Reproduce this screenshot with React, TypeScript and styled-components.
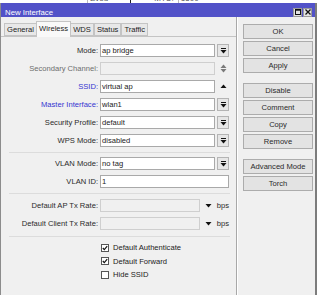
import React from 'react'
import styled, { createGlobalStyle } from 'styled-components'

const GlobalStyle = createGlobalStyle`
    html, body {
        margin: 0;
        padding: 0;
        background: #ffffff;
    }
    body {
        font-family: 'Liberation Sans', Arial, sans-serif;
        font-size: 7.6px;
        color: #222222;
    }
`

const Screen = styled.div`
    width: 320px;
    height: 295px;
    overflow: hidden;
    background: #ffffff;
`
const Desktop = styled.div`
    height: 3px;
    overflow: hidden;
`
const DesktopRow = styled.div`
    display: flex;
    align-items: flex-end;
    height: 9px;
    margin-top: -6px;
    font-size: 8px;
    color: #555;
`
const DesktopCell = styled.div<{ $left: number; $line?: string }>`
    margin-left: ${(p) => p.$left}px;
    height: 9px;
    padding-left: 2px;
    border-left: 1px solid ${(p) => p.$line || 'transparent'};
`
const Window = styled.div`
    width: 317px;
    height: 292px;
    box-sizing: border-box;
    border-left: 1px solid #8c8c8c;
    border-right: 2px solid #7c7c7c;
    background: #f0f0f0;
    display: flex;
    flex-direction: column;
`
const TitleBar = styled.div`
    height: 14px;
    box-sizing: border-box;
    padding: 4px 3px 0 4px;
    background: #5252c8;
    color: #ffffff;
    display: flex;
    align-items: center;
    font-size: 7.8px;
`
const Title = styled.div`
    flex: 1;
`
const TitleButton = styled.div`
    width: 9px;
    height: 9px;
    box-sizing: border-box;
    margin-left: 1px;
    background: #e4e4e4;
    border: 1px solid #9a9a9a;
    display: flex;
    align-items: center;
    justify-content: center;
`
const Body = styled.div`
    flex: 1;
    display: flex;
`
const Main = styled.div`
    width: 235px;
    display: flex;
    flex-direction: column;
    border-right: 1px solid #a8a8a8;
    box-shadow: 1px 0 0 #ffffff;
`
const Tabs = styled.div`
    height: 19px;
    display: flex;
    align-items: flex-end;
    padding-left: 3px;
    position: relative;
    z-index: 1;
`
const Tab = styled.div<{ $active?: boolean }>`
    height: ${(p) => (p.$active ? 16 : 13)}px;
    box-sizing: border-box;
    padding: 0 2px;
    margin: 0 ${(p) => (p.$active ? '-1px' : '0')};
    margin-bottom: ${(p) => (p.$active ? '-1px' : '0')};
    display: flex;
    align-items: center;
    padding-bottom: ${(p) => (p.$active ? '3px' : '0')};
    border: 1px solid #c4c4c4;
    border-bottom: ${(p) => (p.$active ? 'none' : '1px solid #c4c4c4')};
    background: ${(p) => (p.$active ? '#f9f9f9' : '#e8e8e8')};
    color: #222;
`
const Panel = styled.div`
    flex: 1;
    border-top: 1px solid #c4c4c4;
    padding: 7px 7px 0 2px;
    display: flex;
    flex-direction: column;
`
const Section = styled.div`
    display: flex;
    flex-direction: column;
    gap: 5px;
`
const Row = styled.div`
    display: grid;
    grid-template-columns: 95px 129px;
    column-gap: 2px;
    height: 13px;
    align-items: center;
`
const Label = styled.div<{ $tone?: 'normal' | 'muted' | 'link' }>`
    text-align: right;
    white-space: nowrap;
    color: ${(p) => (p.$tone === 'muted' ? '#6d6d6d' : p.$tone === 'link' ? '#3535d0' : '#2a2a2a')};
`
const Control = styled.div`
    display: flex;
    align-items: center;
    height: 13px;
    gap: 2px;
`
const Field = styled.div<{ $disabled?: boolean; $width?: number }>`
    ${(p) => (p.$width ? `width: ${p.$width}px;` : 'flex: 1;')}
    height: 13px;
    box-sizing: border-box;
    border: 1px solid ${(p) => (p.$disabled ? '#cfcfcf' : '#a9a9a9')};
    background: ${(p) => (p.$disabled ? '#f0f0f0' : '#ffffff')};
    padding-left: 1px;
    display: flex;
    align-items: center;
    white-space: nowrap;
    overflow: hidden;
`
const DropButton = styled.div`
    width: 12px;
    height: 13px;
    box-sizing: border-box;
    border: 1px solid #b4b4b4;
    background: #e6e6e6;
    display: flex;
    align-items: center;
    justify-content: center;
`
const GlyphSlot = styled.div<{ $width?: number }>`
    width: ${(p) => p.$width || 12}px;
    height: 13px;
    display: flex;
    align-items: center;
    justify-content: center;
`
const Unit = styled.div`
    color: #2a2a2a;
`
const Separator = styled.div<{ $top: number; $bottom: number }>`
    height: 1px;
    margin: ${(p) => p.$top}px 0 ${(p) => p.$bottom}px 6px;
    width: 221px;
    background: #dcdcdc;
`
const Checks = styled.div`
    display: flex;
    flex-direction: column;
    gap: 2.5px;
`
const CheckRow = styled.div`
    display: flex;
    align-items: center;
    height: 11px;
    padding-left: 98px;
    gap: 4px;
`
const Box = styled.div`
    width: 8px;
    height: 8px;
    box-sizing: border-box;
    border: 1px solid #555;
    background: #ffffff;
    display: flex;
    align-items: center;
    justify-content: center;
`
const Side = styled.div`
    flex: 1;
    padding: 7px 0 0 6px;
    display: flex;
    flex-direction: column;
    gap: 10px;
`
const ButtonGroup = styled.div`
    display: flex;
    flex-direction: column;
    gap: 2px;
`
const Button = styled.div`
    width: 70px;
    height: 15px;
    box-sizing: border-box;
    border: 1px solid #acacac;
    background: #e3e3e3;
    display: flex;
    align-items: center;
    justify-content: center;
    color: #2a2a2a;
`

const DropGlyph = () => (
    <svg width="7" height="6" viewBox="0 0 7 6">
        <rect x="1" y="0" width="5" height="1" fill="#111" />
        <path d="M0.5 2 H6.5 L3.5 5.5 Z" fill="#111" />
    </svg>
)
const UpDown = () => (
    <svg width="7" height="9" viewBox="0 0 7 9">
        <path d="M0.5 4 H6.5 L3.5 0.5 Z" fill="#7a7a7a" />
        <path d="M0.5 5 H6.5 L3.5 8.5 Z" fill="#7a7a7a" />
    </svg>
)
const Up = () => (
    <svg width="7" height="5" viewBox="0 0 7 5">
        <path d="M0.5 4 H6.5 L3.5 0.5 Z" fill="#111" />
    </svg>
)
const Down = () => (
    <svg width="7" height="5" viewBox="0 0 7 5">
        <path d="M0.5 1 H6.5 L3.5 4.5 Z" fill="#111" />
    </svg>
)
const Tick = () => (
    <svg width="6" height="6" viewBox="0 0 6 6">
        <path d="M0.8 3 L2.3 4.6 L5.2 1.2" stroke="#111" strokeWidth="1.2" fill="none" />
    </svg>
)

type SelectRow = { label: string; value?: string; tone?: 'normal' | 'muted' | 'link'; kind: 'drop' | 'updown' | 'up' | 'plain'; disabled?: boolean }

const general: SelectRow[] = [
    { label: 'Mode:', value: 'ap bridge', kind: 'drop' },
    { label: 'Secondary Channel:', tone: 'muted', kind: 'updown', disabled: true },
    { label: 'SSID:', value: 'virtual ap', tone: 'link', kind: 'up' },
    { label: 'Master Interface:', value: 'wlan1', tone: 'link', kind: 'drop' },
    { label: 'Security Profile:', value: 'default', kind: 'drop' },
    { label: 'WPS Mode:', value: 'disabled', kind: 'drop' },
]
const vlan: SelectRow[] = [
    { label: 'VLAN Mode:', value: 'no tag', kind: 'drop' },
    { label: 'VLAN ID:', value: '1', kind: 'plain' },
]

const FormRow = ({ row }: { row: SelectRow }) => (
    <Row>
        <Label $tone={row.tone}>{row.label}</Label>
        <Control>
            <Field $disabled={row.disabled}>{row.value}</Field>
            {row.kind === 'drop' && (
                <DropButton>
                    <DropGlyph />
                </DropButton>
            )}
            {row.kind === 'updown' && (
                <GlyphSlot>
                    <UpDown />
                </GlyphSlot>
            )}
            {row.kind === 'up' && (
                <GlyphSlot>
                    <Up />
                </GlyphSlot>
            )}
        </Control>
    </Row>
)

const RateRow = ({ label }: { label: string }) => (
    <Row>
        <Label>{label}</Label>
        <Control>
            <Field $disabled $width={100} />
            <GlyphSlot $width={13}>
                <Down />
            </GlyphSlot>
            <Unit>bps</Unit>
        </Control>
    </Row>
)

const App = () => {
    return (
        <Screen>
            <GlobalStyle />
            <Desktop>
                <DesktopRow>
                    <DesktopCell $left={87} $line="#bbbbbb">Evod</DesktopCell>
                    <DesktopCell $left={22} $line="#222222" />
                    <DesktopCell $left={18}>MTU:</DesktopCell>
                    <DesktopCell $left={4} $line="#bbbbbb">1500</DesktopCell>
                </DesktopRow>
            </Desktop>
            <Window>
                <TitleBar>
                    <Title>New Interface</Title>
                    <TitleButton>
                        <svg width="6" height="6" viewBox="0 0 6 6">
                            <rect x="0.5" y="0.5" width="5" height="5" fill="none" stroke="#111" />
                            <rect x="0.5" y="0.5" width="5" height="1.2" fill="#111" />
                        </svg>
                    </TitleButton>
                    <TitleButton>
                        <svg width="6" height="6" viewBox="0 0 6 6">
                            <path d="M0.5 0.5 L5.5 5.5 M5.5 0.5 L0.5 5.5" stroke="#111" strokeWidth="1.3" />
                        </svg>
                    </TitleButton>
                </TitleBar>
                <Body>
                    <Main>
                        <Tabs>
                            <Tab>General</Tab>
                            <Tab $active>Wireless</Tab>
                            <Tab>WDS</Tab>
                            <Tab>Status</Tab>
                            <Tab>Traffic</Tab>
                        </Tabs>
                        <Panel>
                            <Section>
                                {general.map((row) => (
                                    <FormRow key={row.label} row={row} />
                                ))}
                            </Section>
                            <Separator $top={5} $bottom={4} />
                            <Section>
                                {vlan.map((row) => (
                                    <FormRow key={row.label} row={row} />
                                ))}
                            </Section>
                            <Separator $top={5} $bottom={5} />
                            <Section>
                                <RateRow label="Default AP Tx Rate:" />
                                <RateRow label="Default Client Tx Rate:" />
                            </Section>
                            <Separator $top={6} $bottom={5} />
                            <Checks>
                                <CheckRow>
                                    <Box>
                                        <Tick />
                                    </Box>
                                    Default Authenticate
                                </CheckRow>
                                <CheckRow>
                                    <Box>
                                        <Tick />
                                    </Box>
                                    Default Forward
                                </CheckRow>
                                <CheckRow>
                                    <Box />
                                    Hide SSID
                                </CheckRow>
                            </Checks>
                        </Panel>
                    </Main>
                    <Side>
                        <ButtonGroup>
                            <Button>OK</Button>
                            <Button>Cancel</Button>
                            <Button>Apply</Button>
                        </ButtonGroup>
                        <ButtonGroup>
                            <Button>Disable</Button>
                            <Button>Comment</Button>
                            <Button>Copy</Button>
                            <Button>Remove</Button>
                        </ButtonGroup>
                        <ButtonGroup>
                            <Button>Advanced Mode</Button>
                            <Button>Torch</Button>
                        </ButtonGroup>
                    </Side>
                </Body>
            </Window>
        </Screen>
    )
}

export default App
